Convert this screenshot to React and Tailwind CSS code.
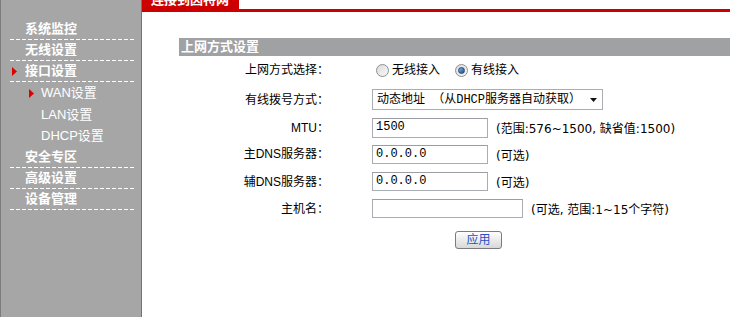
const cjk = { fontFamily: '"Liberation Sans", "Noto Sans CJK SC", sans-serif' };
const serifCjk = { fontFamily: '"Liberation Mono", "Noto Sans CJK SC", monospace' };
const hint = { fontFamily: '"DejaVu Sans", "Noto Sans CJK SC", sans-serif' };

const topItems1 = [
    { label: '系统监控' },
    { label: '无线设置' },
    { label: '接口设置', active: true },
];
const subItems = [
    { label: 'WAN设置', active: true, h: 'h-[22px]' },
    { label: 'LAN设置', h: 'h-[21px]' },
    { label: 'DHCP设置', h: 'h-[22px]' },
];
const topItems2 = [{ label: '安全专区' }, { label: '高级设置' }, { label: '设备管理' }];

function Triangle({ className }) {
    return (
        <svg width="5" height="9" viewBox="0 0 5 9" className={className}>
            <path d="M0 0 L5 4.5 L0 9 Z" fill="#e00000" />
        </svg>
    );
}

function Dash() {
    return <div className="ml-[9px] w-[124px] h-px bg-[repeating-linear-gradient(90deg,#ffffff_0_4px,transparent_4px_6px)]" />;
}

function TopItem({ item }) {
    return (
        <div>
            <div className="relative h-[20px] leading-[20px] pl-[24px] text-[13px] font-bold text-white">
                {item.active && <Triangle className="absolute left-[11px] top-[6px]" />}
                {item.label}
            </div>
            <Dash />
        </div>
    );
}

function Radio({ checked, label }) {
    return (
        <label className="flex items-center gap-[3px]">
            <span className="w-[13px] h-[13px] rounded-full border border-[#8e8f8f] bg-gradient-to-br from-[#dcdcdc] to-[#f8f8f8] flex items-center justify-center">
                {checked && <span className="w-[7px] h-[7px] rounded-full bg-gradient-to-br from-[#7fb6e8] to-[#1a4f86] border border-[#1d4a78]" />}
            </span>
            <span>{label}</span>
        </label>
    );
}

function Row({ h, label, children }) {
    return (
        <div className={`flex items-center ${h}`}>
            <div className="w-[150px] text-right shrink-0">{label}</div>
            <div className="ml-[43px] flex items-center">{children}</div>
        </div>
    );
}

function TextBox({ value, w = 'w-[116px]', h = 'h-[20px]' }) {
    return (
        <div className={`${w} ${h} border border-[#a9adb3] border-t-[#9a9ea4] bg-white px-[3px] text-[12px] leading-[16px]`} style={serifCjk}>
            {value}
        </div>
    );
}

function Hint({ children }) {
    return (
        <span className="ml-[8px] mt-[3px] text-[12px] whitespace-nowrap" style={hint}>
            {children}
        </span>
    );
}

export default function App() {
    return (
        <div className="w-[730px] h-[317px] flex bg-white overflow-hidden text-[12px] text-black" style={cjk}>
            {/* Sidebar */}
            <aside className="w-[143px] h-full shrink-0 bg-[#a6a6a6] border-l-2 border-l-[#7c7c7c] border-r border-r-[#747474] pt-[19px] -ml-px">
                {topItems1.map((item) => <TopItem key={item.label} item={item} />)}
                {subItems.map((item) => (
                    <div key={item.label} className={`relative ${item.h} flex items-center pl-[40px] text-[13px] text-white`}>
                        {item.active && <Triangle className="absolute left-[28px] top-[7px]" />}
                        {item.label}
                    </div>
                ))}
                {topItems2.map((item) => <TopItem key={item.label} item={item} />)}
            </aside>

            {/* Main */}
            <main className="flex-1 h-full">
                <div className="h-[12px] border-b-[3px] border-[#cc0000] overflow-hidden">
                    <div className="w-[97px] h-[9px] bg-[#cc0000] overflow-hidden">
                        <div className="-mt-[7px] pl-[9px] text-[13px] leading-[13px] font-bold text-white whitespace-nowrap">连接到因特网</div>
                    </div>
                </div>

                <div className="pl-[37px] pt-[26px]">
                    <div className="h-[18px] bg-[#a0a1a3] pl-[2px] text-[13px] leading-[18px] font-bold text-white">上网方式设置</div>

                    <Row h="h-[28px]" label="上网方式选择：">
                        <div className="flex items-center gap-[15px] ml-[4px]">
                            <Radio label="无线接入" />
                            <Radio checked label="有线接入" />
                        </div>
                    </Row>

                    <Row h="h-[31px]" label="有线拨号方式：">
                        <div className="w-[231px] h-[21px] border border-[#a9adb3] bg-white flex items-center justify-between pl-[4px] pr-[5px]" style={serifCjk}>
                            <span className="whitespace-nowrap">动态地址 （从DHCP服务器自动获取）</span>
                            <svg width="7" height="4" viewBox="0 0 7 4"><path d="M0 0 H7 L3.5 4 Z" fill="#111" /></svg>
                        </div>
                    </Row>

                    <Row h="h-[25px]" label="MTU：">
                        <TextBox value="1500" />
                        <Hint>(范围:576~1500, 缺省值:1500)</Hint>
                    </Row>

                    <Row h="h-[28px]" label="主DNS服务器：">
                        <TextBox value="0.0.0.0" h="h-[19px]" />
                        <Hint>(可选)</Hint>
                    </Row>

                    <Row h="h-[27px]" label="辅DNS服务器：">
                        <TextBox value="0.0.0.0" h="h-[19px]" />
                        <Hint>(可选)</Hint>
                    </Row>

                    <Row h="h-[27px]" label="主机名：">
                        <TextBox value="" w="w-[151px]" h="h-[19px]" />
                        <Hint>(可选, 范围:1~15个字符)</Hint>
                    </Row>

                    <div className="h-[36px] flex items-center pl-[276px]">
                        <button className="w-[47px] h-[18px] rounded-[3px] border border-[#7b7b7b] bg-gradient-to-b from-[#ffffff] to-[#d8d8d8] text-[12px] leading-[14px] text-[#2552c4]">
                            应用
                        </button>
                    </div>
                </div>
            </main>
        </div>
    );
}
